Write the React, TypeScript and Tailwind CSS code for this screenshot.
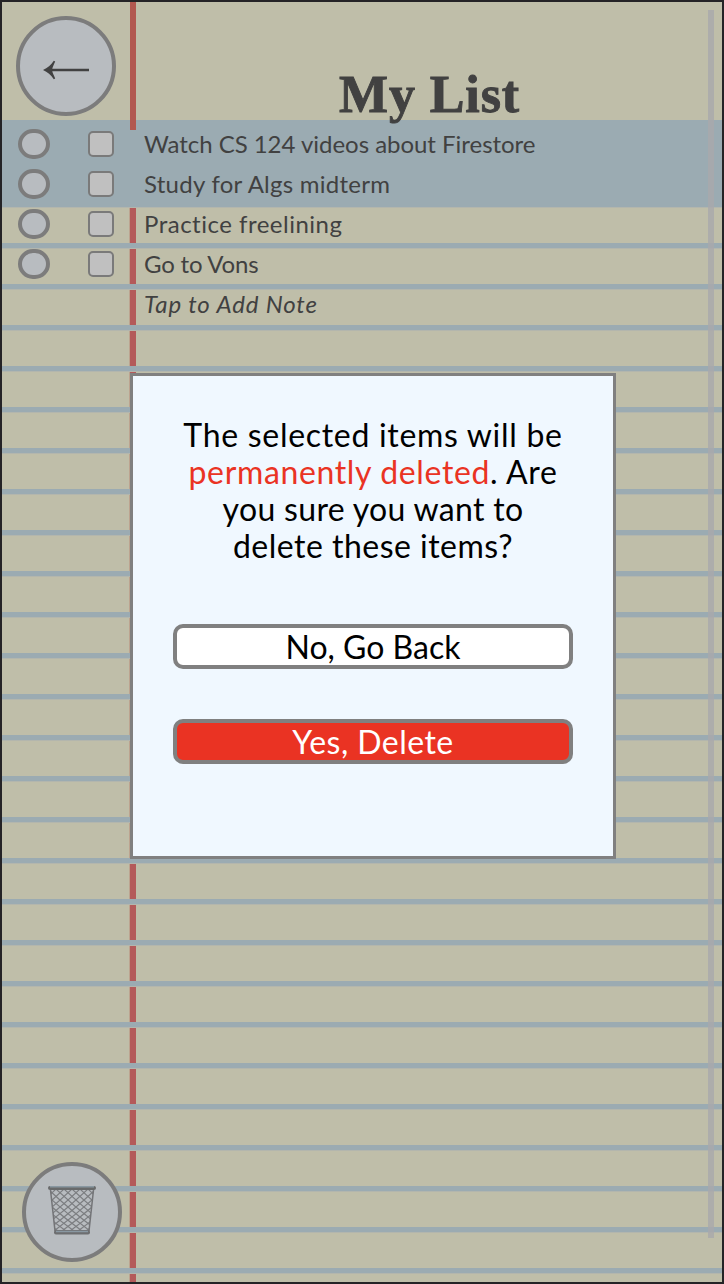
import React from "react";

type Item = { label: string; tracking: string; selected?: boolean };

const items: Item[] = [
  { label: "Watch CS 124 videos about Firestore", tracking: "tracking-[-0.03px]", selected: true },
  { label: "Study for Algs midterm", tracking: "tracking-[0.26px]", selected: true },
  { label: "Practice freelining", tracking: "tracking-[0.5px]" },
  { label: "Go to Vons", tracking: "tracking-[-0.2px]" },
];

const meshOffsets = [-40, -32, -24, -16, -8, 0, 8, 16, 24, 32, 40];

function BackArrow() {
  return (
    <svg width="46" height="20" viewBox="0 0 46 20" fill="none" aria-hidden="true">
      <path d="M6 10H46" stroke="#414141" strokeWidth="2.6" />
      <path d="M0 10C4.500 8 8 5 10.800 .8L12.200 1.600C11 4.500 9.500 7 9 10C9.500 13 11 15.500 12.200 18.400L10.800 19.200C8 15 4.500 12 0 10Z" fill="#414141" />
    </svg>
  );
}

function Wastebasket() {
  return (
    <svg width="48" height="50" viewBox="0 0 48 50" fill="none" aria-hidden="true">
      <defs>
        <clipPath id="basket">
          <path d="M2.500 4H45.500L41 45H7Z" />
        </clipPath>
      </defs>
      <g clipPath="url(#basket)" stroke="#7c7e81" strokeWidth="1.200">
        {meshOffsets.map((x) => (
          <g key={x}>
            <path d={`M${x} 3Q${x + 23} 25 ${x + 50} 45`} />
            <path d={`M${48 - x} 3Q${25 - x} 25 ${-2 - x} 45`} />
          </g>
        ))}
      </g>
      <path d="M2.500 4L7 45M45.500 4L41 45" stroke="#737477" strokeWidth="1.500" />
      <rect x="0" y="0" width="48" height="4" rx="2" fill="#686a6b" />
      <path d="M2 .8H46" stroke="#8998a2" strokeWidth="1.500" />
      <rect x="6" y="44" width="36" height="4.500" rx="2" fill="#6d6e70" />
      <path d="M8 45.500H40" stroke="#8998a2" strokeWidth="1.500" />
    </svg>
  );
}

function ListRow({ label, tracking }: Item) {
  return (
    <li className="flex h-10 items-center">
      <button aria-label="Options" className="ml-4 h-[30px] w-8 rounded-full border-4 border-[#7c7c7c] bg-[#b8bcc0]" />
      <button aria-label="Select" className="ml-[38px] size-[26px] rounded-[5px] border-2 border-[#7a7a7a] bg-[#c0c0c0]" />
      <span className={`ml-[30px] whitespace-nowrap ${tracking}`}>{label}</span>
    </li>
  );
}

export default function App() {
  return (
    <div className="relative flex h-[1284px] w-[724px] flex-col overflow-hidden border-2 border-[#242326] bg-[#bfbea9] font-['Lato','Trebuchet_MS',sans-serif] text-[#414141]">
      <header className="relative z-10 flex h-[118px] shrink-0">
        <div className="absolute left-32 top-0 -z-10 h-32 w-1.5 bg-[#b25850]" />
        <button aria-label="Back" className="ml-3.5 mt-3.5 flex size-[100px] shrink-0 items-center justify-center rounded-full border-4 border-[#7c7c7c] bg-[#b8bcc0] pt-2">
          <BackArrow />
        </button>
        <h1 className="ml-[223px] mt-[63px] whitespace-nowrap font-['Liberation_Serif',serif] text-[52px] font-bold leading-[60px] tracking-[0.9px] [-webkit-text-stroke:0.9px_#414141]">My List</h1>
      </header>

      <main className="flex-1 bg-[#bfbea9] bg-[linear-gradient(#9babb2_0_87px,transparent_87px),repeating-linear-gradient(#9babb2_0_5px,#b3b6ad_5px_6px,transparent_6px_41px),linear-gradient(90deg,transparent_127px,#bca38f_127px_128px,#b45a5a_128px_134px,transparent_134px)]">
        <ul className="pt-1 text-[24px] leading-10">
          {items.map((item) => (
            <ListRow key={item.label} {...item} />
          ))}
          <li className="flex h-10 items-center pl-[142px] italic tracking-[0.85px]">Tap to Add Note</li>
        </ul>
      </main>

      <button aria-label="Delete selected" className="absolute left-5 top-[1160px] flex size-[100px] items-center justify-center rounded-full border-4 border-[#7c7c7c] bg-[#b8bcc0] pb-0.5">
        <Wastebasket />
      </button>
      <div className="absolute left-[706px] top-2 z-20 h-[1228px] w-1.5 bg-[#a9a9ab]/80" />

      <section role="dialog" className="absolute left-32 top-[371px] z-30 flex size-[486px] flex-col items-center border-[3px] border-[#808080] bg-[#f0f8ff] pt-10 text-[32px] text-black">
        <p className="flex flex-col items-center whitespace-nowrap leading-[37px]">
          <span className="tracking-[0.7px]">The selected items will be</span>
          <span className="tracking-[0.64px]"><span className="text-[#ea3323]">permanently deleted</span>. Are</span>
          <span className="tracking-[0.32px]">you sure you want to</span>
          <span className="tracking-[0.48px]">delete these items?</span>
        </p>
        <button className="mt-[60px] flex h-[45px] w-[400px] items-center justify-center rounded-[10px] border-4 border-[#808080] bg-white leading-[37px]">No, Go Back</button>
        <button className="mt-[50px] flex h-[45px] w-[400px] items-center justify-center rounded-[10px] border-4 border-[#808080] bg-[#ea3323] leading-[37px] tracking-[0.45px] text-white">Yes, Delete</button>
      </section>
    </div>
  );
}
